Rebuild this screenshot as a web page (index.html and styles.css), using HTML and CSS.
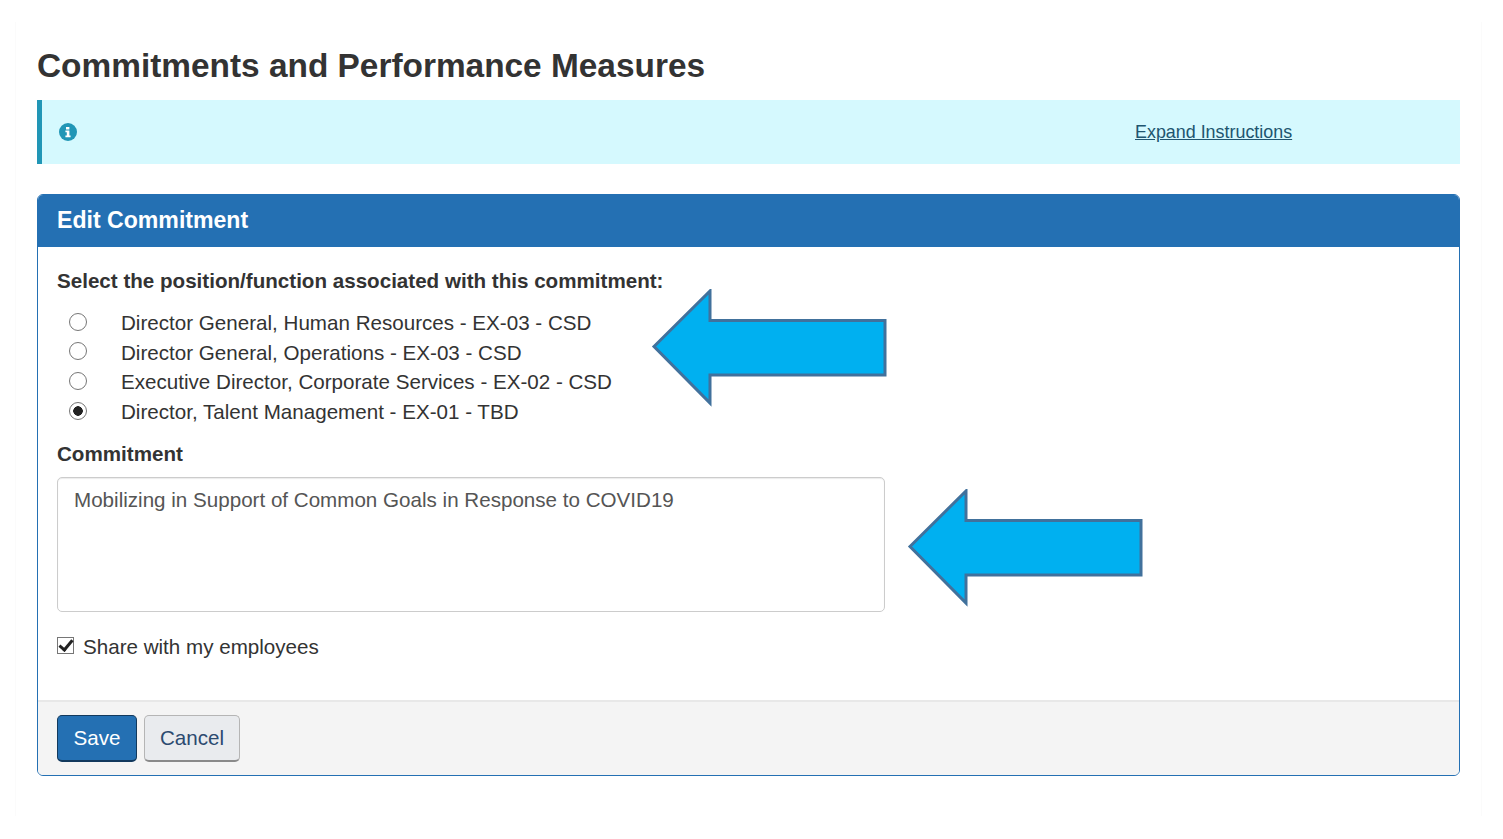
FILE: index.html
```html
<!DOCTYPE html>
<html lang="en">
<head>
  <meta charset="UTF-8">
  <title>Commitments and Performance Measures</title>
  <link rel="stylesheet" href="styles.css">
</head>
<body>
  <div class="page">
    <h1>Commitments and Performance Measures</h1>
    <div class="alert">
      <svg class="alert-icon" viewBox="0 0 18 18" aria-hidden="true">
        <circle cx="9" cy="9" r="9" fill="#2196b6"/>
        <path d="M7 4h3.4v2.6H7zM6.4 7.600h4v5h1.200v1.600H6.400v-1.600h1.400V9.200H6.400z" fill="#fff"/>
      </svg>
      <a class="expand" href="#">Expand Instructions</a>
    </div>
    <form class="panel">
      <div class="panel-head">Edit Commitment</div>
      <div class="panel-body">
        <div class="field-title">Select the position/function associated with this commitment:</div>
        <div class="radios">
          <label class="radio"><input type="radio" name="pos"><span>Director General, Human Resources - EX-03 - CSD</span></label>
          <label class="radio"><input type="radio" name="pos"><span>Director General, Operations - EX-03 - CSD</span></label>
          <label class="radio"><input type="radio" name="pos"><span>Executive Director, Corporate Services - EX-02 - CSD</span></label>
          <label class="radio"><input type="radio" name="pos" checked><span>Director, Talent Management - EX-01 - TBD</span></label>
        </div>
        <label class="field-title" for="commitment">Commitment</label>
        <textarea id="commitment">Mobilizing in Support of Common Goals in Response to COVID19</textarea>
        <label class="check"><input type="checkbox" checked><span>Share with my employees</span></label>
      </div>
      <div class="panel-foot">
        <button type="button" class="btn btn-primary">Save</button>
        <button type="button" class="btn btn-cancel">Cancel</button>
      </div>
    </form>
    <svg class="arrow arrow-one" viewBox="0 0 236 118" aria-hidden="true"><path d="M3 57.500L59 2V31.500H234V86H59V114z"/></svg>
    <svg class="arrow arrow-two" viewBox="0 0 236 118" aria-hidden="true"><path d="M3 57.500L59 2V31.500H234V86H59V114z"/></svg>
  </div>
</body>
</html>
```

FILE: styles.css
```css
html,body{margin:0;padding:0;background:#fff}
body{font-family:"Liberation Sans",Arial,sans-serif;color:#333;font-size:20.600px;line-height:29.600px}
.page{position:relative;margin:22px 21px 0 15px;padding:23px 21px 40px 21px;border-left:1px solid #fbfbfb;border-right:1px solid #fbfbfb;min-height:754px;box-sizing:border-box}
h1{margin:0 0 14px;font-size:33.400px;line-height:41px;font-weight:bold}
.alert{display:flex;align-items:center;height:64px;box-sizing:border-box;background:#d5f9fe;border-left:5px solid #2196b6;padding-left:17px;margin-bottom:30px}
.alert-icon{width:18px;height:18px}
.expand{margin-left:1058px;color:#20556f;font-size:17.900px;position:relative;top:1px}
.panel{border:1px solid #2470b3;border-radius:6px;overflow:hidden}
.panel-head{background:#2470b3;color:#fff;font-weight:bold;font-size:23.100px;height:52px;line-height:51px;padding-left:19px}
.panel-body{padding:18px 19px 0 19px;height:453px;box-sizing:border-box}
.field-title{display:block;font-weight:bold;line-height:31px}
.radios{margin:12px 0 12px}
.radio{display:flex;align-items:center;height:29.600px}
.radio input{appearance:none;width:18px;height:18px;margin:0 0 2px 12px;border:1px solid #767676;border-radius:50%;background:#fff;box-sizing:border-box}
.radio input:checked{background:radial-gradient(circle,#222 0 4.500px,#fff 5px)}
.radio span{margin-left:34px}
textarea{display:block;width:828px;height:135px;box-sizing:border-box;margin:8px 0 19px;padding:7px 16px;border:1px solid #ccc;border-radius:5px;box-shadow:inset 0 1px 1px rgba(0,0,0,.08);font:inherit;color:#555;resize:none}
.check{display:flex;align-items:center;height:30px}
.check input{appearance:none;position:relative;width:17px;height:17px;margin:0 9px 2px 0;border:1px solid #767676;background:#fff;box-sizing:border-box}
.check input:checked::after{content:"";position:absolute;left:4px;top:-1px;width:5px;height:11px;border:solid #222;border-width:0 3px 3px 0;transform:rotate(40deg)}
.panel-foot{display:flex;gap:7px;align-items:center;height:75px;box-sizing:border-box;padding:0 19px;background:#f4f4f4;border-top:2px solid #e8e8e8}
.btn{height:47px;padding:0 15.500px;font:inherit;color:#2c4a70;background:#e9ebee;border:1px solid #b5b5b5;border-bottom:2px solid #8a8a8a;border-radius:5px}
.btn-cancel{padding:0 15px}
.btn-primary{background:#2470b3;color:#fff;border:1px solid #12395d;border-bottom-width:2px}
.arrow{position:absolute;width:236px;height:118px}
.arrow path{fill:#00b0f0;stroke:#41719c;stroke-width:3}
.arrow-one{left:635px;top:267px}
.arrow-two{left:891px;top:467px}
```
